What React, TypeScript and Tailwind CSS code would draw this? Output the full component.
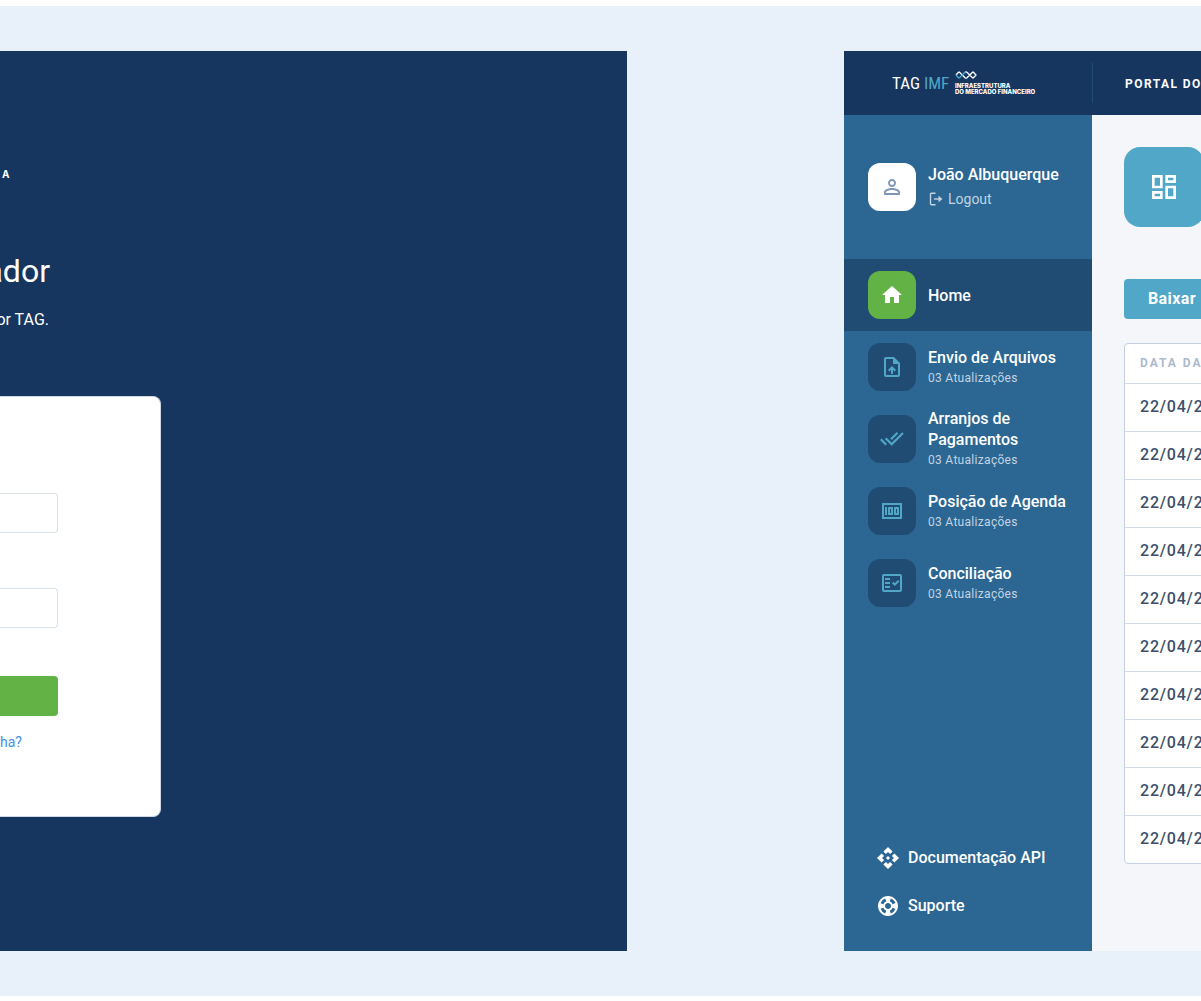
import type { ReactNode } from "react";
import {
  MdApi,
  MdHome,
  MdMoney,
  MdOutlineDashboard,
  MdOutlineFactCheck,
  MdOutlineUploadFile,
  MdPersonOutline,
  MdSupport,
} from "react-icons/md";

function WaveMark() {
  return (
    <svg width="22" height="8" viewBox="0 0 22 8" fill="none" strokeWidth="1.3">
      <path d="M10 1.2Q11 .4 12 1.2L17.500 6.800Q18 7.200 18.500 6.800L21 4 18.500 1.200Q18 .8 17.500 1.200L12 6.800Q11 7.600 10 6.800L4.500 1.200Q4 .8 3.500 1.200L1 4" stroke="#fff" />
      <path d="M1 4l2.500 2.800Q4 7.200 4.500 6.800L10 1.200" stroke="#51a7c8" />
    </svg>
  );
}

function LogoutIcon() {
  return (
    <svg width="14" height="14" viewBox="0 0 14 14" fill="none" stroke="currentColor" strokeWidth="1.4">
      <path d="M6.500 1.200H2.500Q1.500 1.200 1.500 2.200V11.800Q1.500 12.800 2.500 12.800H6.500" />
      <path d="M5 7H11.500" />
      <path d="M9.500 3.700 13.500 7 9.500 10.300Z" fill="currentColor" stroke="none" />
    </svg>
  );
}

function TripleCheckIcon() {
  return (
    <svg width="24" height="24" viewBox="0 0 24 24" fill="none" stroke="currentColor" strokeWidth="2.200">
      <path d="M.8 12.300 6.200 17.700" />
      <path d="M5.700 11.300 11.700 17.300 23 6" />
      <path d="M17.500 5.700 11 12.200" />
    </svg>
  );
}

type NavItem = { label: string; icon: ReactNode; note?: string; active?: boolean };

const nav: NavItem[] = [
  { label: "Home", icon: <MdHome size={24} />, active: true },
  { label: "Envio de Arquivos", icon: <MdOutlineUploadFile size={24} />, note: "03 Atualizações" },
  { label: "Arranjos de Pagamentos", icon: <TripleCheckIcon />, note: "03 Atualizações" },
  { label: "Posição de Agenda", icon: <MdMoney size={24} />, note: "03 Atualizações" },
  { label: "Conciliação", icon: <MdOutlineFactCheck size={24} />, note: "03 Atualizações" },
];

const rows = Array.from({ length: 10 }, (_, i) => i);

function NavLink({ item }: { item: NavItem }) {
  return (
    <a href="#" className={`flex h-18 items-center gap-3 px-6 ${item.active ? "bg-[#204c74]" : ""}`}>
      <span
        className={`flex size-12 shrink-0 items-center justify-center rounded-xl ${
          item.active ? "bg-[#63b246] text-white" : "bg-[#204c74] text-[#51a7c8]"
        }`}
      >
        {item.icon}
      </span>
      <span className="flex flex-col">
        <span className="text-base leading-[21px] font-medium text-white">{item.label}</span>
        {item.note && (
          <span className="text-xs leading-5 tracking-wide text-[#c3d3e2]">{item.note}</span>
        )}
      </span>
    </a>
  );
}

function Login() {
  return (
    <section className="min-w-0 flex-1 overflow-hidden bg-[#16365f] text-white">
      <p className="pt-[117px] pl-[2px] font-['Inter',sans-serif] text-[10px] leading-3 font-bold">A</p>
      <div className="mt-[70px] flex w-[50px] justify-end">
        <h1 className="text-[32px] leading-[42px]">ador</h1>
      </div>
      <div className="mt-4 flex w-[49px] justify-end">
        <p className="text-base leading-6 whitespace-nowrap">or TAG.</p>
      </div>
      <form className="mt-16 w-[161px] rounded-r-lg border border-l-0 border-[#cfd8e3] bg-white pt-24 pr-[102px] pb-16">
        <input aria-label="Usuário" className="block h-10 w-full rounded-r border border-l-0 border-[#d9e1ea] bg-white px-2 text-gray-800" />
        <input type="password" aria-label="Senha" className="mt-[55px] block h-10 w-full rounded-r border border-l-0 border-[#d9e1ea] bg-white px-2 text-gray-800" />
        <button type="button" aria-label="Entrar" className="mt-12 block h-10 w-full rounded-r bg-[#63b246]" />
        <a href="#" className="mt-4 block text-sm leading-5 text-[#3f8fdf]">ha?</a>
      </form>
    </section>
  );
}

function Sidebar() {
  return (
    <aside className="flex w-62 shrink-0 flex-col bg-[#2b6792]">
      <div className="flex items-center gap-3 px-6 py-12">
        <span className="flex size-12 items-center justify-center rounded-xl bg-white text-[#8096b8]">
          <MdPersonOutline size={24} />
        </span>
        <div>
          <p className="text-base leading-6 font-medium text-white">João Albuquerque</p>
          <button type="button" className="flex items-center gap-[5px] pl-px text-sm leading-6 text-[#c3d3e2]">
            <LogoutIcon />
            Logout
          </button>
        </div>
      </div>
      <nav className="flex flex-1 flex-col">
        {nav.map((item) => (
          <NavLink key={item.label} item={item} />
        ))}
        <div className="mt-auto flex flex-col gap-6 px-8 pb-[33px] text-base font-medium text-white">
          <a href="#" className="flex items-center gap-2"><MdApi size={24} />Documentação API</a>
          <a href="#" className="flex items-center gap-2"><MdSupport size={24} />Suporte</a>
        </div>
      </nav>
    </aside>
  );
}

function Dashboard() {
  return (
    <section className="flex w-[357px] shrink-0 flex-col overflow-hidden">
      <header className="flex h-16 shrink-0 items-center bg-[#16365f] text-white">
        <div className="flex h-10 w-[249px] shrink-0 items-center border-r border-[#1f4d76] pl-12">
          <div className="flex w-[57px] gap-1 font-['Roboto_Condensed','Liberation_Sans_Narrow','Roboto',sans-serif] text-[17px] leading-6">
            <span>TAG</span>
            <span className="text-[#51a7c8]">IMF</span>
          </div>
          <div className="ml-1.5 font-['Inter',sans-serif] text-[6px] leading-[6px] font-extrabold whitespace-nowrap">
            <WaveMark />
            <p className="mt-1">INFRAESTRUTURA</p>
            <p>DO MERCADO FINANCEIRO</p>
          </div>
        </div>
        <p className="pt-px pl-8 text-xs font-bold tracking-[0.12em] whitespace-nowrap">PORTAL DO</p>
      </header>
      <div className="flex flex-1">
        <Sidebar />
        <main className="min-w-0 flex-1 overflow-hidden bg-[#f4f6fa] py-8 pl-8">
          <div className="flex size-20 items-center justify-center rounded-2xl bg-[#51a7c8] text-white">
            <MdOutlineDashboard size={32} />
          </div>
          <button type="button" className="mt-[52px] block h-10 w-32 rounded bg-[#51a7c8] pl-6 text-left text-base font-bold tracking-wide text-white">
            Baixar
          </button>
          <div className="mt-6 w-32 rounded border border-[#c5d1e0] bg-white">
            <table className="w-full text-left">
              <thead>
                <tr>
                  <th className="h-[39px] pl-[15px] text-xs font-bold tracking-[2px] whitespace-nowrap text-[#adbacd]">DATA DA</th>
                </tr>
              </thead>
              <tbody>
                {rows.map((row) => (
                  <tr key={row} className="border-t border-[#d3dde9]">
                    <td className="h-12 pl-[15px] text-base font-medium tracking-wider text-[#3d4f6c]">22/04/2</td>
                  </tr>
                ))}
              </tbody>
            </table>
          </div>
        </main>
      </div>
    </section>
  );
}

export default function App() {
  return (
    <div className="flex min-h-screen flex-col bg-white pt-1.5 pb-[5px] font-['Roboto',sans-serif]">
      <div className="flex flex-1 gap-[217px] overflow-hidden bg-[#e8f1fa] py-[45px]">
        <Login />
        <Dashboard />
      </div>
    </div>
  );
}
